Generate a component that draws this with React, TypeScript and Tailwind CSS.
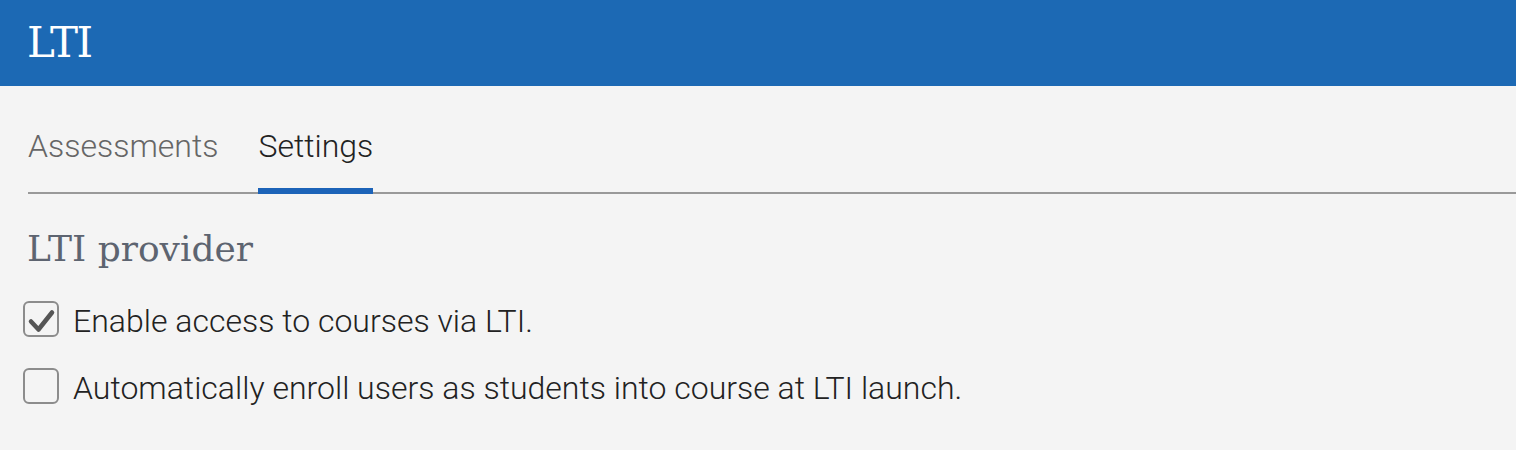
import React from "react";

export default function App() {
  return (
    <div className="w-[1516px] h-[450px] bg-[#f4f4f4] overflow-hidden">
      <header className="h-[86px] bg-[#1c69b4] pl-[27px] pt-[22px]">
        <h1 className="text-[42px] leading-none tracking-[-1.5px] text-white font-['DejaVu_Serif',serif] font-normal">LTI</h1>
      </header>
      <nav className="ml-[28px] flex gap-[40px] border-b-2 border-[#999999] font-['Roboto',sans-serif] font-light text-[32px] leading-none">
        <div className="pt-[44px] pb-[26px] -mb-[2px] border-b-[6px] border-transparent text-[#666666]">Assessments</div>
        <div className="pt-[44px] pb-[26px] -mb-[2px] border-b-[6px] border-[#1c63b8] text-[#222222]">Settings</div>
      </nav>
      <section className="pl-[27px] pt-[37px]">
        <h2 className="text-[36px] leading-none text-[#5d6470] font-['DejaVu_Serif',serif] font-normal">LTI provider</h2>
        <div className="mt-[34px] flex flex-col gap-[31px] font-['Roboto',sans-serif] font-light text-[32px] leading-none text-[#222222]">
          <label className="-ml-[4px] flex items-center gap-[14px] h-[36px]">
            <span className="w-[36px] h-[36px] rounded-[6px] border-2 border-[#8c8c8c] flex items-center justify-center shrink-0">
              <svg width="36" height="36" viewBox="0 0 36 36" className="-m-[2px]">
                <path d="M8 20.5 L15.5 28.5 L29 11.5" fill="none" stroke="#555555" strokeWidth="4.5" strokeLinecap="round" strokeLinejoin="round" />
              </svg>
            </span>
            <span className="pt-[4px]">Enable access to courses via LTI.</span>
          </label>
          <label className="-ml-[4px] flex items-center gap-[14px] h-[36px]">
            <span className="w-[36px] h-[36px] rounded-[6px] border-2 border-[#8c8c8c] shrink-0" />
            <span className="pt-[4px]">Automatically enroll users as students into course at LTI launch.</span>
          </label>
        </div>
      </section>
    </div>
  );
}
